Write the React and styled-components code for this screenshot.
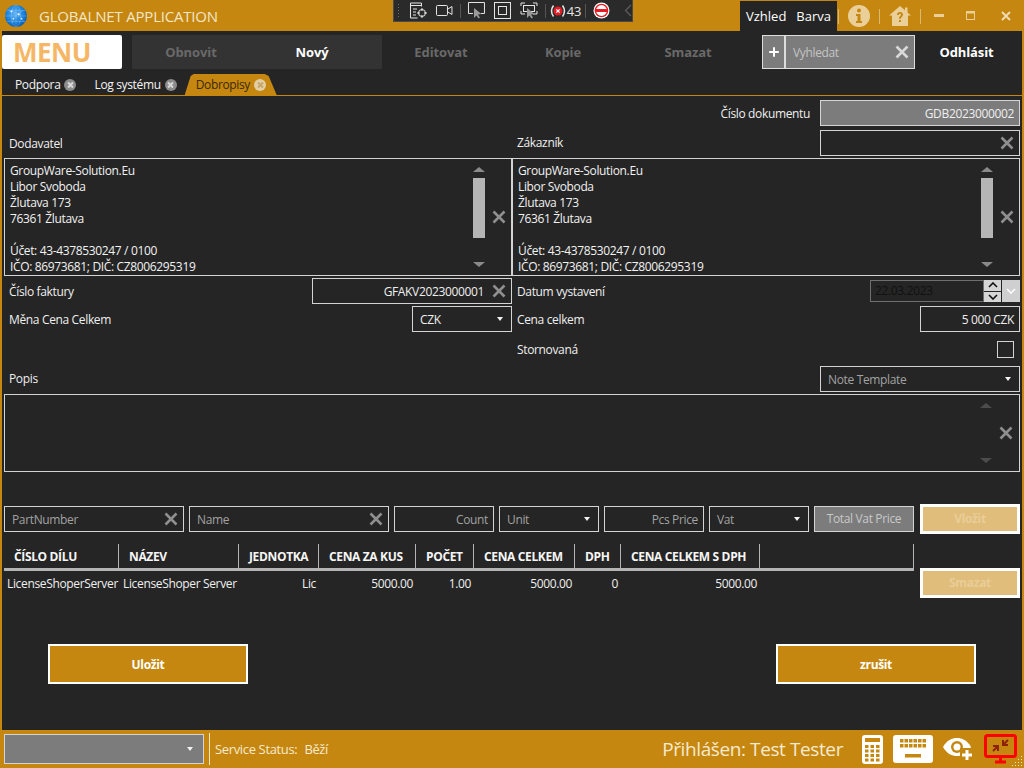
import styled, { createGlobalStyle } from 'styled-components';
import { Plus } from 'lucide-react';

const amber = '#c5870f';
const dark = '#252525';
const line = '#d4d4d4';
const grey = '#7c7c7c';
const font = '"Open Sans", "Noto Sans", sans-serif';

const navItems = [
  { label: 'Obnovit', width: 118 },
  { label: 'Nový', width: 132, active: true, inset: 8 },
  { label: 'Editovat', width: 118 },
  { label: 'Kopie', width: 126 },
  { label: 'Smazat', width: 124 }
];

const tableColumns = [
  { label: 'ČÍSLO DÍLU', width: 115, value: 'LicenseShoperServer', align: 'left', start: 3 },
  { label: 'NÁZEV', width: 120, value: 'LicenseShoper Server', align: 'left', start: 4 },
  { label: 'JEDNOTKA', width: 80, value: 'Lic', align: 'right', inset: 3 },
  { label: 'CENA ZA KUS', width: 97, value: '5000.00', align: 'right', inset: 3 },
  { label: 'POČET', width: 58, value: '1.00', align: 'right', inset: 3 },
  { label: 'CENA CELKEM', width: 101, value: '5000.00', align: 'right', inset: 3 },
  { label: 'DPH', width: 46, value: '0', align: 'right', inset: 3 },
  { label: 'CENA CELKEM S DPH', width: 139, value: '5000.00', align: 'right', inset: 3 }
];

const addressLines = [
  'GroupWare-Solution.Eu',
  'Libor Svoboda',
  'Žlutava 173',
  '76361 Žlutava',
  '',
  'Účet: 43-4378530247 / 0100',
  'IČO: 86973681; DIČ: CZ8006295319'
];

export default function App() {
  return (
    <Page>
      <GlobalStyle />
      <TitleBar>
        <GlobeLogo />
        <AppTitle>GLOBALNET APPLICATION</AppTitle>
        <DebugToolbar />
        <AppearanceTabs>
          <span>Vzhled</span>
          <span>Barva</span>
        </AppearanceTabs>
        <TitleDivider />
        <InfoIcon />
        <TitleDivider />
        <HomeHelpIcon />
        <TitleDivider />
        <WindowButtons />
      </TitleBar>

      <Workspace>
        <NavBar>
          <MenuButton>MENU</MenuButton>
          <NavGroup>
            {navItems.map((item) => (
              <NavButton key={item.label} $width={item.width} $active={item.active} $inset={item.inset}>
                {item.label}
              </NavButton>
            ))}
          </NavGroup>
          <SearchBox>
            <SearchAdd>
              <Plus size={14} strokeWidth={3.4} color="#fff" />
            </SearchAdd>
            <SearchField>
              <span>Vyhledat</span>
              <ClearIcon $color="#d8d8d8" />
            </SearchField>
          </SearchBox>
          <LogoutButton>Odhlásit</LogoutButton>
        </NavBar>

        <TabStrip>
          <Tab>
            Podpora
            <TabClose />
          </Tab>
          <Tab>
            Log systému
            <TabClose />
          </Tab>
          <ActiveTab>
            <ActiveTabShape />
            <ActiveTabLabel>
              Dobropisy
              <TabClose $light />
            </ActiveTabLabel>
          </ActiveTab>
        </TabStrip>

        <Form>
          <DocumentRow>
            <Label $right>Číslo dokumentu</Label>
            <Input $width={200} $filled $end>
              GDB2023000002
            </Input>
          </DocumentRow>

          <Columns>
            <Row>
              <Label>Dodavatel</Label>
            </Row>
            <Row>
              <Label $lift>Zákazník</Label>
              <Input $width={200}>
                <span />
                <ClearIcon />
              </Input>
            </Row>
          </Columns>

          <Columns>
            <AddressBox />
            <AddressBox />
          </Columns>

          <Columns>
            <Row>
              <Label>Číslo faktury</Label>
              <Input $width={200} $end>
                <InputValue>GFAKV2023000001</InputValue>
                <ClearIcon />
              </Input>
            </Row>
            <Row>
              <Label>Datum vystavení</Label>
              <DatePicker />
            </Row>
          </Columns>

          <Columns>
            <Row>
              <Label>Měna Cena Celkem</Label>
              <Select $width={100}>CZK</Select>
            </Row>
            <Row>
              <Label>Cena celkem</Label>
              <Input $width={100} $end>
                5 000 CZK
              </Input>
            </Row>
          </Columns>

          <Columns>
            <span />
            <Row $height={30}>
              <Label>Stornovaná</Label>
              <Checkbox />
            </Row>
          </Columns>

          <Row>
            <Label $lift>Popis</Label>
            <Select $width={200} $muted>
              Note Template
            </Select>
          </Row>

          <NoteBox>
            <span />
            <Scrollbar $dim />
            <ClearSlot>
              <ClearIcon />
            </ClearSlot>
          </NoteBox>

          <ItemRow>
            <Input $width={180} $muted>
              <span>PartNumber</span>
              <ClearIcon />
            </Input>
            <Input $width={200} $muted>
              <span>Name</span>
              <ClearIcon />
            </Input>
            <Input $width={100} $muted $end>
              Count
            </Input>
            <Select $width={100} $muted>
              Unit
            </Select>
            <Input $width={100} $muted $end>
              Pcs Price
            </Input>
            <Select $width={100} $muted>
              Vat
            </Select>
            <TotalBox>Total Vat Price</TotalBox>
            <SideButton>Vložit</SideButton>
          </ItemRow>

          <TableArea>
            <Table>
              <HeaderRow>
                {tableColumns.map((col) => (
                  <HeaderCell key={col.label} $width={col.width}>
                    {col.label}
                  </HeaderCell>
                ))}
              </HeaderRow>
              <BodyRow>
                {tableColumns.map((col) => (
                  <BodyCell key={col.label} $width={col.width} $align={col.align} $inset={col.inset} $start={col.start}>
                    {col.value}
                  </BodyCell>
                ))}
              </BodyRow>
            </Table>
            <SideButton $offset={24}>Smazat</SideButton>
          </TableArea>

          <ActionRow>
            <ActionButton>Uložit</ActionButton>
            <ActionButton>zrušit</ActionButton>
          </ActionRow>
        </Form>
      </Workspace>

      <StatusBar>
        <StatusSelect>
          <Caret />
        </StatusSelect>
        <StatusDivider />
        <StatusText>Service Status:</StatusText>
        <StatusValue>Běží</StatusValue>
        <UserName>Přihlášen: Test Tester</UserName>
        <StatusIcons />
      </StatusBar>
    </Page>
  );
}

function AddressBox() {
  return (
    <TextBox>
      <AddressText>
        {addressLines.map((text, index) => (
          <AddressLine key={index}>{text}</AddressLine>
        ))}
      </AddressText>
      <Scrollbar />
      <ClearSlot>
        <ClearIcon />
      </ClearSlot>
    </TextBox>
  );
}

function Scrollbar({ $dim }) {
  return (
    <ScrollTrack>
      <ArrowUp $dim={$dim} />
      {$dim ? null : <ScrollThumb />}
      <ArrowDown $dim={$dim} />
    </ScrollTrack>
  );
}

function DatePicker() {
  return (
    <DateWrap>
      <DateInput>22.03.2023</DateInput>
      <Spinner>
        <SpinButton>
          <svg width="10" height="6" viewBox="0 0 10 6">
            <path d="M1 5l4-4 4 4" fill="none" stroke="#111" strokeWidth="1.6" />
          </svg>
        </SpinButton>
        <SpinButton>
          <svg width="10" height="6" viewBox="0 0 10 6">
            <path d="M1 1l4 4 4-4" fill="none" stroke="#111" strokeWidth="1.6" />
          </svg>
        </SpinButton>
      </Spinner>
      <DateDrop>
        <svg width="10" height="6" viewBox="0 0 10 6">
          <path d="M1 1l4 4 4-4" fill="none" stroke="#fff" strokeWidth="1.6" />
        </svg>
      </DateDrop>
    </DateWrap>
  );
}

function ClearIcon({ $color = '#8f8f8f' }) {
  return (
    <ClearSvg viewBox="0 0 14 14">
      <path d="M1.5 1.5l11 11M12.5 1.5l-11 11" fill="none" stroke={$color} strokeWidth="2.6" />
    </ClearSvg>
  );
}

function GlobeLogo() {
  return (
    <LogoSvg viewBox="0 0 24 24">
      <defs>
        <radialGradient id="globeFill" cx="45%" cy="40%" r="65%">
          <stop offset="0" stopColor="#5db2f2" />
          <stop offset="0.6" stopColor="#1b82dc" />
          <stop offset="1" stopColor="#0c55a8" />
        </radialGradient>
      </defs>
      <circle cx="12" cy="12" r="12" fill="url(#globeFill)" />
      <g fill="none" stroke="#bfe3ff" strokeWidth="0.5" opacity="0.55">
        <ellipse cx="12" cy="12" rx="5" ry="12" />
        <path d="M0 12h24M2 6h20M2 18h20M12 0v24" />
        <path d="M4 5l12 6 5 8M7 20l6-10 7-4" />
      </g>
      <g fill="#fff">
        <circle cx="7" cy="7" r="1" />
        <circle cx="15" cy="10" r="1.1" />
        <circle cx="9" cy="15" r="0.9" />
        <circle cx="18" cy="15" r="0.9" />
      </g>
    </LogoSvg>
  );
}

function DebugToolbar() {
  return (
    <Toolbar>
      <ToolbarGrip />
      <svg width="18" height="17" viewBox="0 0 18 17" fill="none" stroke="#e6e6e6">
        <path d="M12.5 4.5V1H1.5v15h7M1.5 3.5h11M4 7h4M4 10h3M4 13h3" />
        <circle cx="13" cy="11" r="3.5" />
        <path d="M13 6v3M13 13v3M8 11h3M15 11h3" />
      </svg>
      <svg width="17" height="13" viewBox="0 0 17 13" fill="none" stroke="#e6e6e6">
        <rect x="0.5" y="1.5" width="11" height="10" rx="1" />
        <path d="M12 5l4-2.5v8L12 8" />
      </svg>
      <ToolbarDivider />
      <svg width="17" height="17" viewBox="0 0 17 17" fill="none" stroke="#e6e6e6">
        <path d="M5 11.5H.5V.5h16v11H13" />
        <path d="M6 6l0 10 2.5-2.5 2 3 1.500-1-2-3 3.500-.5z" fill="#9a9a9a" stroke="none" />
      </svg>
      <svg width="17" height="17" viewBox="0 0 17 17" fill="none" stroke="#e6e6e6">
        <rect x="0.5" y="0.5" width="16" height="16" />
        <rect x="4.5" y="4.5" width="8" height="8" />
      </svg>
      <svg width="18" height="17" viewBox="0 0 18 17" fill="none" stroke="#e6e6e6">
        <path d="M1 4V1h4M13 1h4v3M1 9v3h4M13 12h4V9" />
        <rect x="3.5" y="3.5" width="11" height="6" />
        <path d="M7 6l0 10 2.5-2.5 2 3 1.500-1-2-3 3.500-.5z" fill="#9a9a9a" stroke="none" />
      </svg>
      <ToolbarDivider />
      <ErrorCount>
        <svg width="16" height="14" viewBox="0 0 16 14">
          <path d="M3.5 1.5C1 5 1 9 3.5 12.5M12.5 1.5C15 5 15 9 12.5 12.5" fill="none" stroke="#e6e6e6" strokeWidth="1.5" />
          <circle cx="8" cy="7" r="4.5" fill="#e51c23" />
          <path d="M6.3 5.3l3.4 3.4M9.7 5.3l-3.4 3.4" stroke="#fff" strokeWidth="1.2" />
        </svg>
        43
      </ErrorCount>
      <ToolbarDivider />
      <svg width="17" height="17" viewBox="0 0 17 17">
        <circle cx="8.5" cy="8.5" r="8" fill="#fff" />
        <circle cx="8.5" cy="8.5" r="6.8" fill="#e51c23" />
        <circle cx="8.5" cy="8.5" r="5.4" fill="#fff" />
        <rect x="3" y="7" width="11" height="3" fill="#e51c23" />
      </svg>
      <ToolbarBack>
        <svg width="8" height="13" viewBox="0 0 8 13">
          <path d="M7 1L1.5 6.5 7 12" fill="none" stroke="#5c5c5c" strokeWidth="1.3" />
        </svg>
      </ToolbarBack>
    </Toolbar>
  );
}

function InfoIcon() {
  return (
    <TitleIcon width="22" height="22" viewBox="0 0 22 22">
      <circle cx="11" cy="11" r="11" fill="#ebcf99" />
      <circle cx="11" cy="5.5" r="2" fill={amber} />
      <path d="M8 9h4.5v7H14v2H8v-2h1.5v-5H8z" fill={amber} />
    </TitleIcon>
  );
}

function HomeHelpIcon() {
  return (
    <TitleIcon width="22" height="20" viewBox="0 0 22 20">
      <path d="M11 0L0 9.5h3V20h16V9.5h3l-3.5-3V1.5H16v2.800z" fill="#ebcf99" />
      <path d="M8 9c0-2 1.300-3 3-3s3 1 3 2.700c0 2.300-2.300 2.300-2.300 4H10c0-2.700 2-2.700 2-4 0-.6-.4-1-1-1s-1 .4-1 1.300z" fill={amber} />
      <rect x="10" y="14" width="1.9" height="2" fill={amber} />
    </TitleIcon>
  );
}

function WindowButtons() {
  return (
    <WindowControls>
      <svg width="10" height="3" viewBox="0 0 10 3">
        <rect width="10" height="3" fill="#ebcf99" />
      </svg>
      <svg width="9" height="9" viewBox="0 0 9 9" fill="none">
        <rect x="0.5" y="0.5" width="8" height="8" stroke="#ebcf99" />
        <rect x="0.5" y="0.5" width="8" height="2" fill="#ebcf99" />
      </svg>
      <CloseGlyph width="10" height="10" viewBox="0 0 10 10">
        <path d="M1 1l8 8M9 1L1 9" stroke="#f0dcb4" strokeWidth="2" />
      </CloseGlyph>
    </WindowControls>
  );
}

function StatusIcons() {
  const calcCells = [];
  for (let r = 0; r < 4; r += 1) {
    for (let c = 0; c < 3; c += 1) {
      calcCells.push(<rect key={`${r}-${c}`} x={3 + c * 5.5} y={10 + r * 4.5} width="3.5" height="3" fill={amber} />);
    }
  }
  const keyCells = [];
  for (let r = 0; r < 2; r += 1) {
    for (let c = 0; c < 6; c += 1) {
      keyCells.push(<rect key={`${r}-${c}`} x={7 + c * 4.5} y={4 + r * 5} width="3.5" height="3.5" fill={amber} />);
    }
  }
  return (
    <IconRow>
      <svg width="21" height="29" viewBox="0 0 21 29">
        <rect width="21" height="29" rx="3" fill="#fff" />
        <rect x="3" y="3" width="15" height="4" fill={amber} />
        {calcCells}
      </svg>
      <svg width="40" height="28" viewBox="0 0 40 28">
        <rect width="40" height="28" rx="3" fill="#fff" />
        {keyCells}
        <rect x="12" y="19" width="16" height="3.5" fill={amber} />
      </svg>
      <svg width="31" height="24" viewBox="0 0 31 24">
        <path d="M0 10C4 3 9 1 14 1s10 2 14 9c-4 7-9 9-14 9S4 17 0 10z" fill="#fff" />
        <circle cx="14" cy="10" r="6" fill={amber} />
        <circle cx="14" cy="10" r="3.5" fill="#fff" />
        <rect x="17" y="11" width="14" height="13" fill={amber} />
        <path d="M24 13v10M19 18h10" stroke="#fff" strokeWidth="3" />
      </svg>
      <svg width="33" height="30" viewBox="0 0 33 30">
        <rect x="1.5" y="1.5" width="30" height="21" rx="2" fill="none" stroke="#f00" strokeWidth="3" />
        <path d="M11 28h11M16.5 23v5" stroke="#f00" strokeWidth="3" />
        <path d="M9 17l5-5M9 12l5 0 0 5M24 6l-5 5M24 11l-5 0 0-5" fill="none" stroke="#8e2208" strokeWidth="2" />
      </svg>
      <ResizeGrip />
    </IconRow>
  );
}

const GlobalStyle = createGlobalStyle`
  html, body {
    margin: 0;
    padding: 0;
    background: ${amber};
  }

  * {
    box-sizing: border-box;
  }
`;

const Page = styled.div`
  width: 1024px;
  height: 768px;
  overflow: hidden;
  display: flex;
  flex-direction: column;
  position: relative;
  background: ${amber};
  color: #f2f2f2;
  font-family: ${font};
  font-size: 12px;
  letter-spacing: -0.35px;
`;

const TitleBar = styled.header`
  height: 31px;
  display: flex;
  align-items: center;
  flex-shrink: 0;
`;

const LogoSvg = styled.svg`
  width: 22px;
  height: 22px;
  margin-left: 5px;
`;

const AppTitle = styled.div`
  margin-left: 12px;
  font-size: 15px;
  color: #f3e6c8;
  flex: 1;
  letter-spacing: -0.2px;
`;

const Toolbar = styled.div`
  position: absolute;
  left: 393px;
  top: 0;
  width: 240px;
  height: 22px;
  display: flex;
  align-items: center;
  gap: 9px;
  padding-left: 3px;
  background: #2a2a2a;
  border: 1px solid #4a4a4a;
  border-top: none;
`;

const ToolbarGrip = styled.div`
  width: 3px;
  height: 16px;
  background-image: radial-gradient(#6c6c6c 0.7px, transparent 0.9px);
  background-size: 3px 3px;
`;

const ToolbarDivider = styled.div`
  width: 1px;
  height: 14px;
  margin: 0 -2px;
  background: #555;
`;

const ErrorCount = styled.div`
  display: flex;
  align-items: center;
  gap: 1px;
  margin: 0 -3px;
  font-size: 13px;
  color: #e6e6e6;
`;

const ToolbarBack = styled.div`
  display: flex;
  margin-left: 5px;
`;

const AppearanceTabs = styled.div`
  height: 30px;
  width: 97px;
  margin-top: 1px;
  margin-right: 1px;
  display: flex;
  align-items: center;
  justify-content: center;
  gap: 10px;
  background: ${dark};
  font-size: 13px;
  letter-spacing: 0;
  color: #fff;
`;

const TitleDivider = styled.div`
  width: 1px;
  height: 15px;
  background: #dcb970;
  margin-top: 2px;
`;

const TitleIcon = styled.svg`
  margin: 0 9px;
`;

const WindowControls = styled.div`
  width: 103px;
  display: flex;
  align-items: center;
  gap: 22px;
  padding-left: 13px;
`;

const CloseGlyph = styled.svg`
  margin-left: 4px;
`;

const Workspace = styled.main`
  flex: 1;
  margin: 0 2px;
  display: flex;
  flex-direction: column;
  background: ${dark};
`;

const NavBar = styled.nav`
  height: 39px;
  padding-top: 4px;
  display: flex;
  align-items: flex-start;
`;

const MenuButton = styled.div`
  width: 120px;
  height: 34px;
  border-radius: 2px;
  background: #fff;
  color: #f5b766;
  font-size: 26px;
  font-weight: 700;
  line-height: 35px;
  padding-left: 11px;
  letter-spacing: -0.5px;
`;

const NavGroup = styled.div`
  display: flex;
  margin-left: 10px;
`;

const NavButton = styled.div`
  width: ${({ $width }) => $width}px;
  height: 34px;
  line-height: 34px;
  text-align: center;
  padding-right: ${({ $inset }) => $inset || 0}px;
  font-size: 13px;
  font-weight: 700;
  letter-spacing: -0.1px;
  color: ${({ $active }) => ($active ? '#fff' : '#696969')};
  background: ${({ $active }) => ($active ? '#333333' : 'transparent')};
  &:first-child {
    background: #333333;
  }
`;

const SearchBox = styled.div`
  width: 153px;
  height: 34px;
  margin-left: 12px;
  display: flex;
  gap: 1px;
  border: 1px solid #dcdcdc;
  background: #dcdcdc;
`;

const SearchAdd = styled.div`
  width: 21px;
  display: flex;
  align-items: center;
  justify-content: center;
  background: ${grey};
`;

const SearchField = styled.div`
  flex: 1;
  margin-left: 1px;
  display: flex;
  align-items: center;
  justify-content: space-between;
  padding: 0 5px 0 7px;
  background: ${grey};
  color: #c4c4c4;
`;

const LogoutButton = styled.div`
  flex: 1;
  height: 34px;
  line-height: 34px;
  padding-right: 4px;
  text-align: center;
  font-size: 13px;
  font-weight: 700;
  letter-spacing: -0.1px;
  color: #fff;
`;

const TabStrip = styled.div`
  height: 26px;
  padding-left: 13px;
  display: flex;
  align-items: flex-end;
  border-bottom: 1px solid ${amber};
`;

const Tab = styled.div`
  height: 21px;
  display: flex;
  align-items: center;
  gap: 4px;
  margin-right: 18px;
  color: #f4f4f4;
`;

const TabClose = styled.span`
  width: 12px;
  height: 12px;
  border-radius: 50%;
  position: relative;
  background: ${({ $light }) => ($light ? '#e3cfa5' : '#8c8c8c')};

  &::before,
  &::after {
    content: '';
    position: absolute;
    left: 2.5px;
    top: 5px;
    width: 7px;
    height: 2px;
    background: ${({ $light }) => ($light ? '#c5a868' : '#d8d8d8')};
    transform: rotate(45deg);
  }

  &::after {
    transform: rotate(-45deg);
  }
`;

const ActiveTab = styled.div`
  position: relative;
  width: 92px;
  height: 21px;
  margin-left: -10px;
  display: flex;
  align-items: center;
`;

const ActiveTabShape = styled.div`
  position: absolute;
  inset: 0;
  background: ${amber};
  clip-path: polygon(0 100%, 6px 2px, 9px 0, 80px 0, 84px 2px, 100% 100%);
`;

const ActiveTabLabel = styled.div`
  position: relative;
  display: flex;
  align-items: center;
  gap: 4px;
  padding-left: 11px;
  color: #3a2a0a;
`;

const Form = styled.div`
  padding: 4px 2px 0;
  display: flex;
  flex-direction: column;
  gap: 2px;
`;

const DocumentRow = styled.div`
  height: 26px;
  margin-bottom: 2px;
  display: flex;
  align-items: center;
  justify-content: flex-end;
  gap: 10px;
`;

const Columns = styled.div`
  display: grid;
  grid-template-columns: 508px 508px;
`;

const Row = styled.div`
  height: ${({ $height }) => $height || 26}px;
  display: flex;
  align-items: center;
  justify-content: space-between;
`;

const Label = styled.div`
  padding-left: ${({ $right }) => ($right ? 0 : 5)}px;
  margin-top: ${({ $lift }) => ($lift ? -2 : 1)}px;
  color: #efefef;
`;

const Input = styled.div`
  width: ${({ $width }) => $width}px;
  height: 26px;
  display: flex;
  align-items: center;
  justify-content: ${({ $end }) => ($end ? 'flex-end' : 'space-between')};
  padding: 0 5px 0 7px;
  border: 1px solid ${line};
  background: ${({ $filled }) => ($filled ? grey : 'transparent')};
  color: ${({ $muted }) => ($muted ? '#a2a2a2' : '#efefef')};
`;

const InputValue = styled.span`
  margin-right: 8px;
`;

const ClearSvg = styled.svg`
  width: 14px;
  height: 14px;
  flex-shrink: 0;
`;

const Select = styled.div`
  width: ${({ $width }) => $width}px;
  height: 26px;
  display: flex;
  align-items: center;
  justify-content: space-between;
  padding: 0 8px 0 7px;
  border: 1px solid ${line};
  color: ${({ $muted }) => ($muted ? '#a2a2a2' : '#efefef')};

  &::after {
    content: '';
    border-left: 3.5px solid transparent;
    border-right: 3.5px solid transparent;
    border-top: 4px solid #f2f2f2;
  }
`;

const TextBox = styled.div`
  height: 118px;
  display: flex;
  border: 1px solid ${line};
`;

const AddressText = styled.div`
  flex: 1;
  padding: 4px 0 0 5px;
`;

const AddressLine = styled.div`
  height: 16px;
  line-height: 16px;
`;

const ScrollTrack = styled.div`
  width: 12px;
  padding: 8px 0;
  display: flex;
  flex-direction: column;
  justify-content: space-between;
  align-items: center;
`;

const ArrowUp = styled.div`
  border-left: 6px solid transparent;
  border-right: 6px solid transparent;
  border-bottom: 5px solid ${({ $dim }) => ($dim ? '#4c4c4c' : '#8a8a8a')};
`;

const ArrowDown = styled.div`
  border-left: 6px solid transparent;
  border-right: 6px solid transparent;
  border-top: 5px solid ${({ $dim }) => ($dim ? '#4c4c4c' : '#8a8a8a')};
`;

const ScrollThumb = styled.div`
  width: 12px;
  height: 60px;
  margin: 6px 0 auto;
  background: #b5b5b5;
`;

const ClearSlot = styled.div`
  width: 27px;
  display: flex;
  align-items: center;
  justify-content: center;
  margin-right: -1px;
`;

const DateWrap = styled.div`
  width: 150px;
  height: 22px;
  display: flex;
`;

const DateInput = styled.div`
  width: 114px;
  padding-left: 4px;
  line-height: 20px;
  border: 1px solid #6f6f6f;
  color: #111;
`;

const Spinner = styled.div`
  width: 17px;
  display: flex;
  flex-direction: column;
  gap: 1px;
`;

const SpinButton = styled.div`
  flex: 1;
  display: flex;
  align-items: center;
  justify-content: center;
  background: #d6d6d6;
`;

const DateDrop = styled.div`
  width: 18px;
  margin-left: 1px;
  display: flex;
  align-items: center;
  justify-content: center;
  background: #cfcfcf;
`;

const Checkbox = styled.div`
  width: 17px;
  height: 17px;
  margin-right: 6px;
  border: 1px solid ${line};
`;

const NoteBox = styled.div`
  height: 78px;
  display: grid;
  grid-template-columns: 1fr 12px 27px;
  border: 1px solid ${line};
`;

const ItemRow = styled.div`
  margin-top: 30px;
  height: 30px;
  display: flex;
  align-items: center;
  gap: 5px;
`;

const TotalBox = styled.div`
  width: 100px;
  height: 26px;
  line-height: 24px;
  text-align: center;
  border: 1px solid ${line};
  background: ${grey};
  color: #c8c8c8;
`;

const SideButton = styled.div`
  width: 100px;
  height: 30px;
  line-height: 24px;
  margin-top: ${({ $offset }) => $offset || 0}px;
  margin-left: ${({ $offset }) => ($offset ? 0 : 1)}px;
  text-align: center;
  font-weight: 700;
  border: 3px solid #fff;
  background: #e0bd7a;
  color: #e9cd98;
`;

const TableArea = styled.div`
  margin-top: 8px;
  display: flex;
  justify-content: space-between;
`;

const Table = styled.div`
  width: 910px;
`;

const HeaderRow = styled.div`
  height: 27px;
  display: flex;
  border-bottom: 3px solid #b4b4b4;
  border-right: 1px solid #b4b4b4;
`;

const HeaderCell = styled.div`
  width: ${({ $width }) => $width}px;
  padding-left: 10px;
  line-height: 25px;
  font-weight: 700;
  white-space: nowrap;
  color: #f6f6f6;
  border-right: 1px solid #b4b4b4;
`;

const BodyRow = styled.div`
  height: 24px;
  display: flex;
  align-items: center;
`;

const BodyCell = styled.div`
  width: ${({ $width }) => $width}px;
  padding: 0 ${({ $inset }) => $inset || 0}px 0 ${({ $start }) => $start || 3}px;
  text-align: ${({ $align }) => $align};
  white-space: nowrap;
  color: #efefef;
`;

const ActionRow = styled.div`
  margin-top: 44px;
  padding: 0 44px;
  display: flex;
  justify-content: space-between;
`;

const ActionButton = styled.div`
  width: 200px;
  height: 40px;
  line-height: 37px;
  text-align: center;
  font-weight: 700;
  border: 2px solid #fff;
  background: ${amber};
  color: #fff;
`;

const StatusBar = styled.footer`
  height: 38px;
  flex-shrink: 0;
  padding-left: 4px;
  display: flex;
  align-items: center;
  color: #f6ead0;
`;

const StatusSelect = styled.div`
  width: 200px;
  height: 30px;
  padding-right: 10px;
  display: flex;
  align-items: center;
  justify-content: flex-end;
  border: 1px solid ${line};
  background: ${grey};
`;

const Caret = styled.span`
  border-left: 3.5px solid transparent;
  border-right: 3.5px solid transparent;
  border-top: 4px solid #f2f2f2;
`;

const StatusDivider = styled.div`
  width: 1px;
  height: 32px;
  margin: 0 5px;
  background: #f2e4c6;
`;

const StatusText = styled.span`
  font-size: 13px;
`;

const StatusValue = styled.span`
  margin-left: 7px;
  font-size: 13px;
`;

const UserName = styled.div`
  margin-left: auto;
  font-size: 19px;
  letter-spacing: -0.4px;
  white-space: nowrap;
`;

const IconRow = styled.div`
  position: relative;
  width: 181px;
  padding-left: 19px;
  display: flex;
  align-items: center;
  gap: 10px;
`;

const ResizeGrip = styled.div`
  position: absolute;
  right: 2px;
  bottom: -2px;
  width: 11px;
  height: 11px;
  background-image: radial-gradient(#f3e6c8 1px, transparent 1px);
  background-size: 3px 3px;
  clip-path: polygon(100% 0, 100% 100%, 0 100%);
`;
